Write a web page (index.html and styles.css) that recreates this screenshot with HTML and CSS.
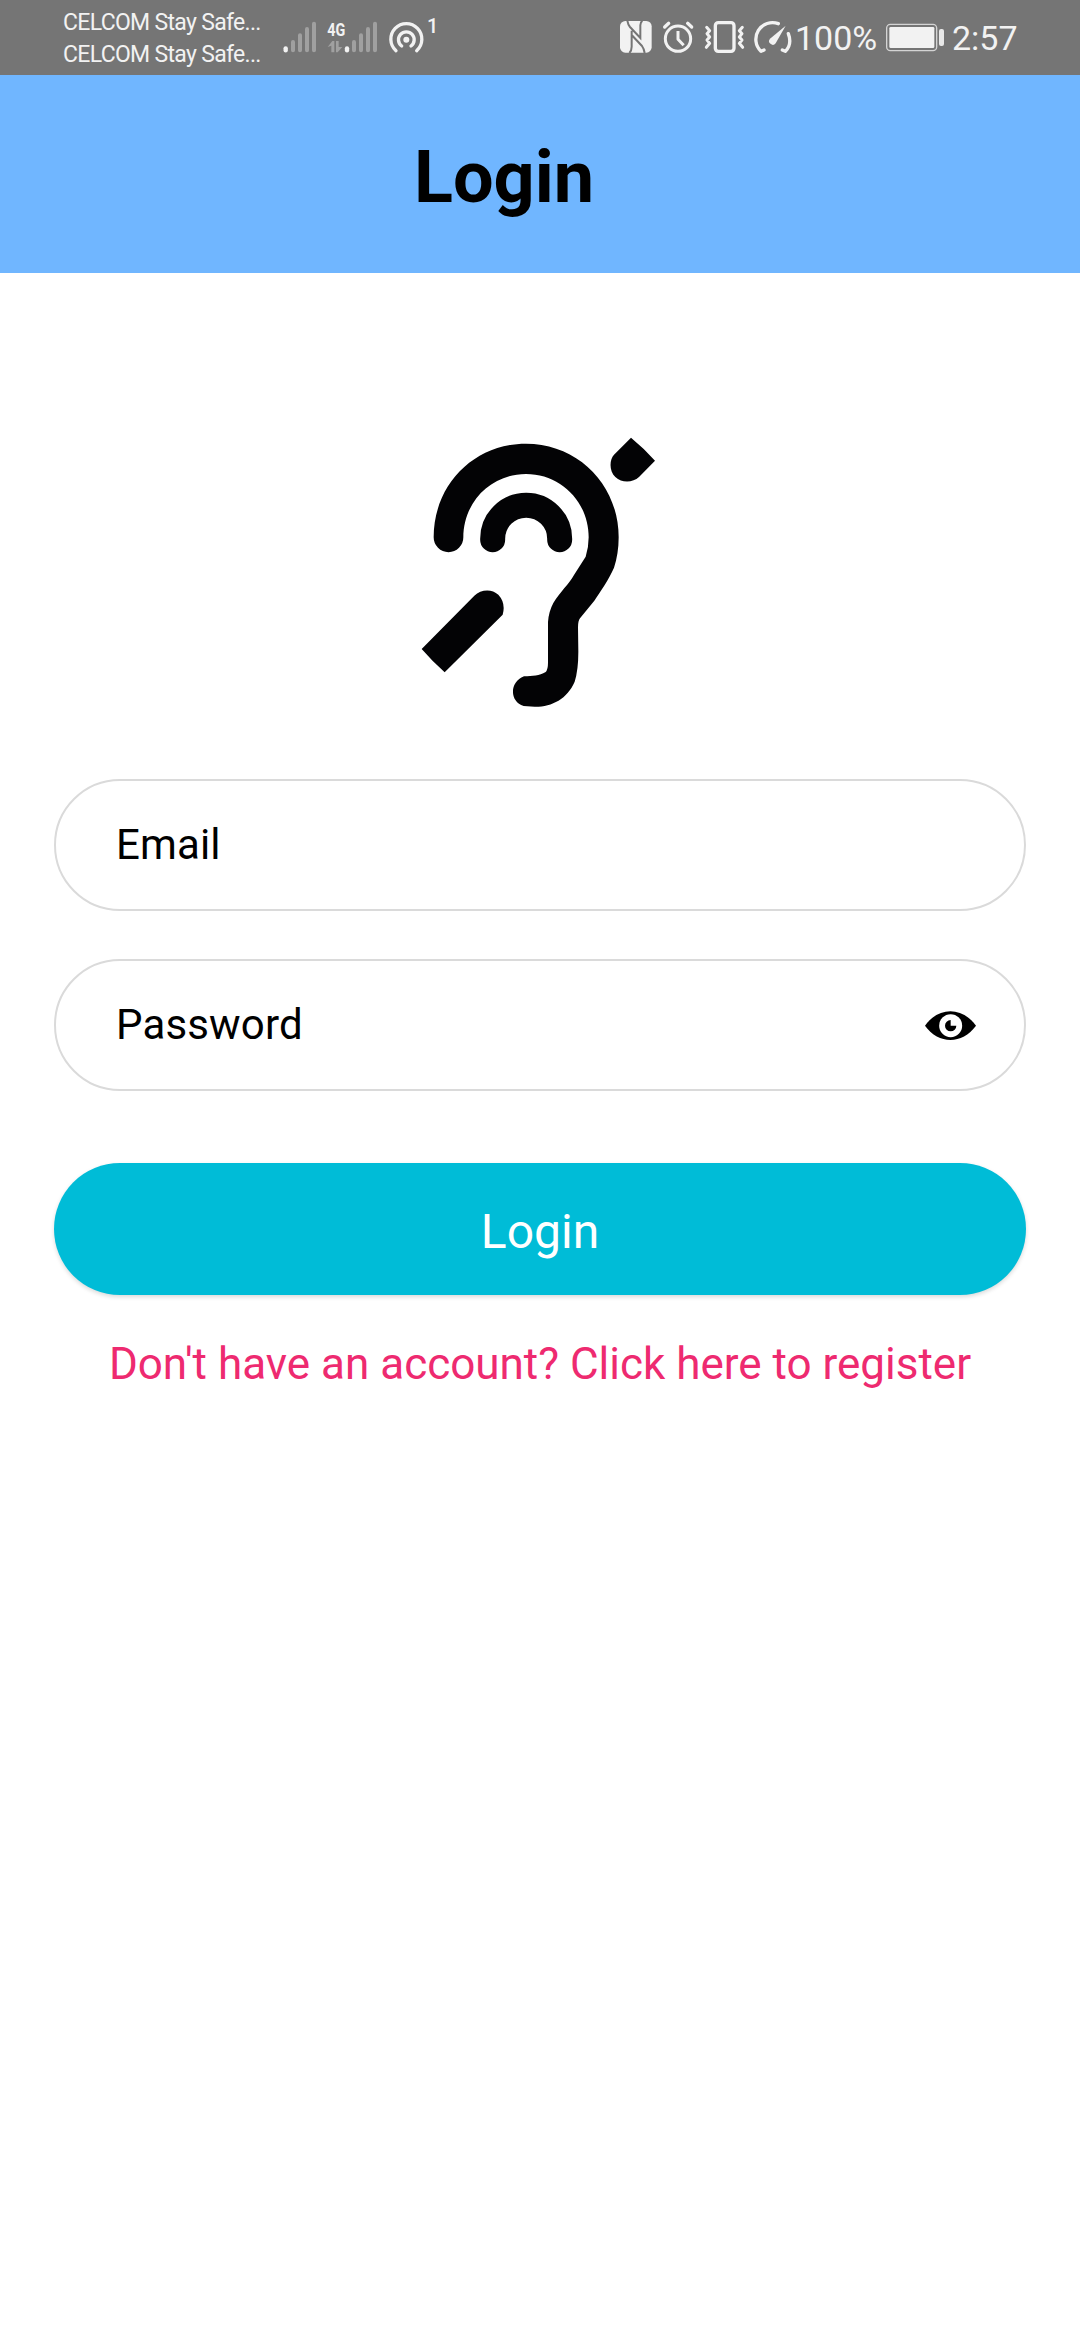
FILE: index.html
```html
<!DOCTYPE html>
<html lang="en">
<head>
<meta charset="utf-8">
<title>Login</title>
<link rel="stylesheet" href="styles.css">
</head>
<body>
<div class="status">
  <div class="carriers"><span>CELCOM Stay Safe...</span><span>CELCOM Stay Safe...</span></div>
  <svg class="signal" width="36" height="34" viewBox="36 60 108 102">
    <g stroke-width="12" stroke-linecap="round" fill="none"><path stroke="#a0a0a0" d="M69 126v25M90 106v45M111 87v64M132 71v80"/><path stroke="#f2f2f2" stroke-width="13" d="M47 145v6"/></g>
  </svg>
  <svg class="data" width="54" height="34" viewBox="168 60 162 102">
    <text x="172" y="107" textLength="54" lengthAdjust="spacingAndGlyphs" class="net">4G</text>
    <path fill="#a0a0a0" d="M173 141L187 123h6v34h-9v-20zM198 123h8v18h11l-14 16h-5z"/>
    <g stroke-width="12" stroke-linecap="round" fill="none"><path stroke="#a0a0a0" d="M252 126v25M273 106v45M294 87v64M315 71v80"/><path stroke="#f2f2f2" stroke-width="13" d="M231 145v6"/></g>
  </svg>
  <svg class="hotspot" width="38" height="34" viewBox="354 60 114 102">
    <circle cx="409" cy="119" r="9" fill="#f2f2f2"/>
    <g fill="none" stroke="#f2f2f2" stroke-width="10" stroke-linecap="round"><path d="M395 138A23.500 23.500 0 1 1 423 138"/><path d="M378 152A46.500 46.500 0 1 1 440 152"/></g>
  </svg>
  <span class="count">1</span>
  <div class="right">
    <svg width="34" height="34" viewBox="57 60 102 102">
      <rect x="60" y="63" width="95" height="95" rx="16" fill="#f2f2f2"/>
      <path fill="none" stroke="#757575" stroke-width="6" d="M82 62Q84 74 90 81L121 114V76Q121 67 127 62M95 92V140Q95 152 88 159M95 105L126 138Q132 146 134 159"/>
    </svg>
    <svg class="alarm" width="33" height="34" viewBox="186 60 99 102">
      <g fill="none" stroke="#f2f2f2" stroke-width="9" stroke-linecap="round"><circle cx="234" cy="116" r="38"/><path stroke-linecap="butt" stroke-linejoin="round" d="M234 93v25l17 18"/><path stroke-width="10" d="M194 81l12-11M275 81l-12-11"/></g>
    </svg>
    <svg class="vibrate" width="42" height="34" viewBox="312 60 126 102">
      <g fill="none" stroke="#f2f2f2" stroke-linecap="round" stroke-linejoin="round"><rect x="346" y="68" width="56" height="86" rx="9" stroke-width="10"/><path stroke-width="9" d="M320 82l9 10-8 9 8 10-8 9 8 10-10 12M427 82l-9 10 8 9-8 10 8 9-8 10 10 12"/></g>
    </svg>
    <svg class="gauge" width="40" height="34" viewBox="459 60 120 102">
      <path fill="none" stroke="#f2f2f2" stroke-width="10" stroke-linecap="round" stroke-linejoin="round" d="M535 71A50 50 0 0 0 483 154L492 150M565 101Q577 133 556 154L547 150"/>
      <path fill="#f2f2f2" d="M557 77L527 130A11 11 0 1 1 510 116Z"/>
    </svg>
    <span class="pct">100%</span>
    <svg class="battery" width="60" height="30" viewBox="285 66 180 90">
      <rect x="290" y="73" width="150" height="79" rx="11" fill="none" stroke="#d4d4d4" stroke-width="4"/><rect x="298" y="81" width="135" height="63" rx="4" fill="#f2f2f2"/><rect x="447" y="87" width="15" height="51" rx="6" fill="#e8e8e8"/>
    </svg>
    <span class="time">2:57</span>
  </div>
</div>
<header class="header"><h1>Login</h1></header>
<main class="main">
  <svg class="logo" width="280" height="300" viewBox="0 0 840 900">
    <path fill="#030305" d="M101 352C101 192 224 71 378 71C534 71 656 194 656 352C656 385 651 417 642 443C626 480 601 514 583 542L540 595Q534 602 534 622L535 695Q535 750 524 785C502 837 454 861 404 860L371 858C328 845 328 786 372 769C398 768 418 768 437 756Q444 748 444 728V606Q446 575 460 549C482 514 506 493 522 465L557 410Q566 382 566 352C566 246 483 162 378 162C273 162 190 246 190 352A44.500 44.500 0 0 1 101 352Z"/>
    <path fill="none" stroke="#030305" stroke-width="75" stroke-linecap="round" d="M278 359V356A100.500 100.500 0 0 1 479 356V359"/>
    <path fill="#030305" d="M65 687L223 527C242 508 275 505 295 524Q318 549 308 584L134 757Q98 725 65 687ZM693 53Q731 84 765 122L717 171C699 188 666 190 646 171C627 153 628 119 642 104Z"/>
  </svg>
  <div class="field">Email</div>
  <div class="field password">Password
    <svg width="53" height="31" viewBox="252 207 159 93"><path d="M255 254C296 196 366 196 408 254C366 311 296 311 255 254Z"/><circle cx="332" cy="254" r="34.500" fill="#fff"/><path d="M332 254V237A17 17 0 1 0 349 254Z"/></svg>
  </div>
  <div class="button">Login</div>
  <div class="link">Don't have an account? Click here to register</div>
</main>
</body>
</html>
```
FILE: styles.css
```css
* { box-sizing: border-box; }
body { margin: 0; background: #fff; color: #000; font-family: Roboto, sans-serif; min-height: 2340px; }
svg { display: block; flex: none; }
.status { height: 75px; background: #757575; color: #f2f2f2; display: flex; align-items: flex-start; padding: 0 62px; white-space: nowrap; }
.carriers { display: flex; flex-direction: column; width: 220px; padding: 7px 0 0 1px; font-size: 23px; line-height: 32px; letter-spacing: -0.68px; }
.signal, .data, .hotspot { margin-top: 20px; }
.data, .hotspot { margin-left: 8px; }
.net { font-size: 54px; font-weight: 700; fill: #f2f2f2; }
.count { font-size: 20px; line-height: 24px; font-weight: 500; margin: 14px 0 0 1px; }
.right { display: flex; width: 399px; margin-left: auto; padding-top: 20px; }
.alarm, .vibrate { margin-left: 9px; }
.gauge { margin-left: 7px; }
.pct, .time { font-size: 34px; line-height: 40px; margin-top: -2px; }
.pct { width: 90px; padding-left: 2px; }
.battery { margin: 2px 0 0 2px; }
.time { margin-left: 7px; }
.header { height: 198px; background: #70b6ff; padding: 61px 0 0 414px; }
.header h1 { margin: 0; font-size: 72px; line-height: 84px; font-weight: 700; }
.main { display: flex; flex-direction: column; padding: 147px 54px 0; }
.logo { margin-left: 346px; }
.field { height: 132px; border: 2px solid #dadada; border-radius: 66px; padding: 0 47px 0 60px; display: flex; align-items: center; justify-content: space-between; font-size: 42px; line-height: 50px; letter-spacing: .15px; margin-top: 59px; }
.password { margin-top: 48px; }
.button { height: 132px; margin-top: 72px; border-radius: 66px; background: #00bcd7; color: #fff; font-size: 48px; display: flex; align-items: center; justify-content: center; padding-top: 4px; box-shadow: 0 2px 4px rgba(0,0,0,.15); }
.link { margin-top: 43px; text-align: center; color: #ee2a70; font-size: 44px; line-height: 52px; white-space: nowrap; }
```
